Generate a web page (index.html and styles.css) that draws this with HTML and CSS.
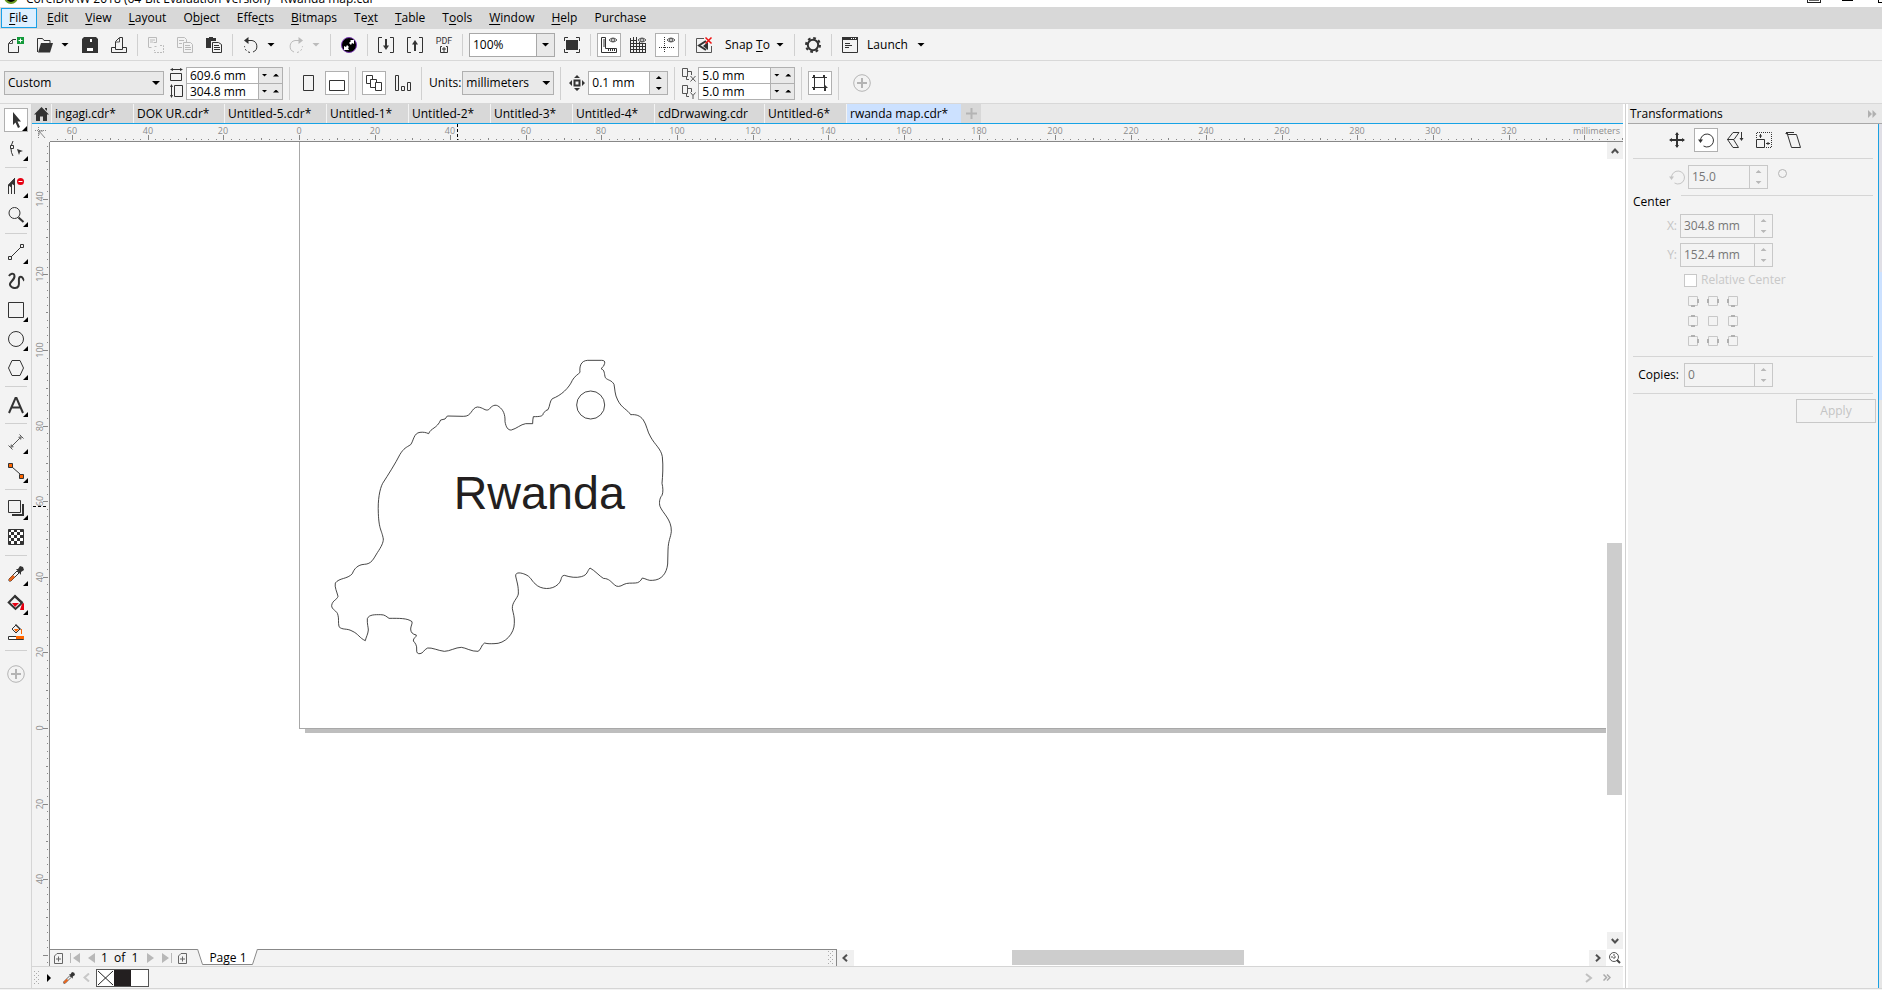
FILE: index.html
```html
<!DOCTYPE html>
<html lang="en">
<head>
<meta charset="utf-8">
<title>CorelDRAW 2018 - Rwanda map.cdr</title>
<link rel="stylesheet" href="styles.css">
</head>
<body>
<header class="titlebar">
  <span class="app-dot"></span><span class="title-text">CorelDRAW 2018 (64-Bit Evaluation Version) - Rwanda map.cdr</span>
  <span class="window-icons"><i class="win-user"></i><i class="win-min"></i><i class="win-max"></i></span>
</header>

<nav class="menubar" aria-label="Main menu">
  <button class="menu-item active"><u>F</u>ile</button><button class="menu-item"><u>E</u>dit</button><button class="menu-item"><u>V</u>iew</button><button class="menu-item"><u>L</u>ayout</button><button class="menu-item">O<u>b</u>ject</button><button class="menu-item">Effe<u>c</u>ts</button><button class="menu-item"><u>B</u>itmaps</button><button class="menu-item">Te<u>x</u>t</button><button class="menu-item"><u>T</u>able</button><button class="menu-item">T<u>o</u>ols</button><button class="menu-item"><u>W</u>indow</button><button class="menu-item"><u>H</u>elp</button><button class="menu-item">Purchase</button>
</nav>

<div class="toolbar">
  <button class="tool" aria-label="New"><svg class="icon" viewBox="0 0 16 16"><path d="M8 2.500H4.500L.5 6.500v9h10V9" class="ln"/><path d="M4.500 3v3.500H1" class="ln thin"/><path d="M9 0h7v7H9z" fill="#139a3a"/><path d="M12.500 1.500v4M10.500 3.500h4" stroke="#fff" stroke-width="1"/></svg></button>
  <div class="split"><button class="tool" aria-label="Open"><svg class="icon" viewBox="0 0 16 16"><path d="M.5 15V1.500h5l1.500 2h6V6" class="ln"/><path d="M1 15.500L4 6h12l-3 9.500z" class="fl"/></svg></button><button class="drop" aria-label="Recent files"></button></div>
  <button class="tool" aria-label="Save"><svg class="icon" viewBox="0 0 16 16"><path d="M2 0h12l2 2v14H0V2z" class="fl"/><path d="M8 2h2v3H8zM5 11h6v3H5z" fill="#fff"/></svg></button>
  <button class="tool" aria-label="Print"><svg class="icon" viewBox="0 0 16 16"><path d="M4.500 10.500h-4v5h15v-5h-4M4.500 12.500v-8l4-4h3v12z" class="ln"/><path d="M8.500 1v4H5" class="ln thin"/></svg></button>
  <span class="sep"></span>
  <button class="tool off" disabled aria-label="Cut"><svg class="icon" viewBox="0 0 16 16"><path d="M.5 10V.5h8v5h-3M2 3h5M2 5h3" class="ln"/><path d="M.5 10.500h3" class="ln"/><path d="M6.500 9.500h3M12 8.500h3.500v7h-9V13" class="ln" stroke-dasharray="2 1"/></svg></button>
  <button class="tool off" disabled aria-label="Copy"><svg class="icon" viewBox="0 0 16 16"><path d="M5 10.500H.5V.5h7l2 2V5M2 3.500h5M2 6.500h3M6.500 5.500h7l2 2v8h-9zM8 8.500h5M8 10.500h6M8 12.500h6" class="ln"/></svg></button>
  <button class="tool" aria-label="Paste"><svg class="icon" viewBox="0 0 16 16"><path d="M0 1h3V0h4v1h3v3H5v7H0z" class="fl"/><path d="M6.500 5.500h6l3 2v8h-9zM8 8.500h5M8 10.500h6M8 12.500h6" class="ln" fill="#f3f3f3"/></svg></button>
  <span class="sep"></span>
  <div class="split"><button class="tool" aria-label="Undo"><svg class="icon" viewBox="0 0 16 16"><path d="M4 3.500h5a6 6 0 0 1 1 11.500" class="ln"/><path d="M7 15.500Q2 14.500 1.500 9" class="ln" stroke-dasharray="2 2"/><path d="M5.500 0v7L1 3.500z" class="fl"/></svg></button><button class="drop" aria-label="Undo list"></button></div>
  <div class="split"><button class="tool off" disabled aria-label="Redo"><svg class="icon" viewBox="0 0 16 16"><path d="M12 3.500H7A6 6 0 0 0 6 15" class="ln"/><path d="M9 15.500Q14 14.500 14.500 9" class="ln" stroke-dasharray="2 2"/><path d="M10.500 0v7L15 3.500z" class="fl"/></svg></button><button class="drop off" disabled aria-label="Redo list"></button></div>
  <span class="sep"></span>
  <button class="tool" aria-label="Search content"><svg class="icon" viewBox="0 0 16 16"><circle cx="8" cy="8" r="7.500" fill="#000" stroke="#7d3cb5"/><path d="M9 3h4v4l-2-1-1 2-2-2 2-2zM3 13V9l2 1 1-2 2 2-1 1 1 2z" fill="#fff"/></svg></button>
  <span class="sep"></span>
  <button class="tool" aria-label="Import"><svg class="icon" viewBox="0 0 16 16"><path d="M4 .5H.5v15H4M12 .5h3.500v15H12" class="ln"/><path d="M8 2v8" class="ln bold"/><path d="M5 8.500h6L8 13z" class="fl"/></svg></button>
  <button class="tool" aria-label="Export"><svg class="icon" viewBox="0 0 16 16"><path d="M4 .5H.5v15H4M12 .5h3.500v15H12" class="ln"/><path d="M8 6v8" class="ln bold"/><path d="M5 7.500h6L8 3z" class="fl"/></svg></button>
  <button class="tool pdf" aria-label="Publish to PDF"><span>PDF</span><svg width="8" height="8" viewBox="0 0 8 8"><path d="M2 1.500H.5v6h7v-6H6M4 7V2M2 4h4" class="ln"/></svg></button>
  <span class="sep"></span>
  <div class="combo zoom"><input value="100%" aria-label="Zoom level"><button class="drop" aria-label="Zoom levels"></button></div>
  <button class="tool" aria-label="Full screen"><svg class="icon" viewBox="0 0 16 16"><path d="M2 3h12v10H2z" class="fl"/><path d="M.5 4V.5H4M12 .5h3.500V4M15.500 12v3.500H12M4 15.500H.5V12" class="ln"/></svg></button>
  <span class="sep"></span>
  <button class="tool on" aria-label="Show rulers"><svg class="icon" viewBox="0 0 16 16"><path d="M.5.5h4v11h11v4H.5zM2 3h2M2 5h2M2 7h2M2 9h2M7.500 12v2M9.500 12v2M11.500 12v2M13.500 12v2" class="ln"/><path d="M8 3q4-4 8 0-4 4-8 0z" class="ln thin"/><circle cx="12" cy="3" r="1.500" class="ln thin"/></svg></button>
  <button class="tool" aria-label="Show grid"><svg class="icon" viewBox="0 0 16 16"><path d="M.5 1v15M3.500 0v16M6.500 0v16M9.500 5v11M12.500 6v10M15.500 7v9M0 3.500h7M0 6.500h16M0 9.500h16M0 12.500h16M0 15.500h16" class="ln"/><path d="M8 3q4-4 8 0-4 4-8 0z" class="ln thin"/><circle cx="12" cy="3" r="1.500" class="ln thin"/></svg></button>
  <button class="tool on" aria-label="Show guidelines"><svg class="icon" viewBox="0 0 16 16"><path d="M5.500 0v16M0 10.500h16" class="ln" stroke-dasharray="1 1"/><path d="M8 3q4-4 8 0-4 4-8 0z" class="ln thin"/><circle cx="12" cy="3" r="1.500" class="ln thin"/></svg></button>
  <span class="sep"></span>
  <button class="tool" aria-label="Snap off"><svg class="icon" viewBox="0 0 16 16"><path d="M8 1.500H.5v14h15V9" class="ln thin"/><path d="M10 4L3 8.500 10 13" class="ln bold"/><path d="M12 5v8L7 9z" class="fl"/><path d="M9.500.5l6 6M15.500.5l-6 6" stroke="#e11" stroke-width="1.500"/></svg></button>
  <button class="text-tool snap"><span>Snap <u>T</u>o</span><i class="tri"></i></button>
  <span class="sep"></span>
  <button class="tool" aria-label="Options"><svg class="icon" viewBox="0 0 16 16"><circle cx="8" cy="8" r="5.200" class="ln bold"/><circle cx="8" cy="8" r="7" fill="none" stroke="#333" stroke-width="2" stroke-dasharray="2.750 2.750"/></svg></button>
  <span class="sep"></span>
  <button class="text-tool launch"><svg class="icon" viewBox="0 0 16 16"><path d="M.5.5h15v15H.5zM3 6.500h5M3 8.500h7M3 10.500h4" class="ln"/><path d="M0 0h16v3H0z" class="fl"/><path d="M9 1h1v1H9zM11 1h1v1h-1zM13 1h1v1h-1z" fill="#fff"/></svg><span>Launch</span><i class="tri"></i></button>
</div>

<div class="toolbar property-bar">
  <div class="select-box preset"><select aria-label="Page size"><option>Custom</option></select></div>
  <div class="size-group">
    <div class="size-icons"><svg width="14" height="13" viewBox="0 0 14 13"><path d="M.5 5.500h11v7H.5zM1 1.500h11" class="ln"/><path d="M3 0v3L0 1.500zM10 0v3l3-1.500z" class="fl"/></svg><svg width="14" height="14" viewBox="0 0 14 14"><path d="M4.500 1.500h8v11h-8zM1.500 1v12" class="ln"/><path d="M0 3h3L1.500 0zM0 11h3l-1.500 3z" class="fl"/></svg></div>
    <div class="pair"><div class="pair-row"><input value="609.6 mm" aria-label="Page width"><button class="pm" aria-label="Decrease width"><i class="tri small"></i></button><button class="pm" aria-label="Increase width"><i class="tri small up"></i></button></div><div class="pair-row"><input value="304.8 mm" aria-label="Page height"><button class="pm" aria-label="Decrease height"><i class="tri small"></i></button><button class="pm" aria-label="Increase height"><i class="tri small up"></i></button></div></div>
  </div>
  <span class="sep tall"></span>
  <button class="tool" aria-label="Portrait"><svg class="icon" viewBox="0 0 16 16"><path d="M3.500.5h10v15h-10z" class="ln"/></svg></button>
  <button class="tool on" aria-label="Landscape"><svg class="icon" viewBox="0 0 16 16"><path d="M.5 5.500h15v10H.5z" class="ln"/></svg></button>
  <span class="sep tall"></span>
  <button class="tool on" aria-label="All pages"><svg class="icon" viewBox="0 0 16 16"><path d="M4 8.500H.5v-8h6V4M9 12.500H4.500v-8h6V7M9.500 7.500h6v8h-6z" class="ln"/></svg></button>
  <button class="tool" aria-label="Current page"><svg class="icon" viewBox="0 0 16 16"><path d="M.5.5h3v15h-3zM6.500 11.500h3v4h-3zM12.500 7.500h3v8h-3z" class="ln"/></svg></button>
  <span class="sep tall"></span>
  <label class="units" for="units">Units:</label>
  <div class="select-box units-box"><select id="units"><option>millimeters</option></select></div>
  <span class="sep tall"></span>
  <div class="nudge"><svg class="icon" viewBox="0 0 16 16"><path d="M5.500 5.500h5v5h-5z" class="ln bold"/><path d="M8 0l3 3H5zM8 16l3-3H5zM0 8l3-3v6zM16 8l-3-3v6z" class="fl"/></svg>
  <div class="spin"><input value="0.1 mm" aria-label="Nudge distance"><span class="spin-btns"><button aria-label="Increase"><i class="tri small up"></i></button><button aria-label="Decrease"><i class="tri small"></i></button></span></div></div>
  <span class="sep tall"></span>
  <div class="size-group">
    <div class="size-icons"><svg width="14" height="14" viewBox="0 0 14 14"><path d="M.5.5h5v8h-5zM6 3.500h3.500V7M4.500 9v2.500H7" class="ln thin"/><path d="M8.500 8l5 5.500M13.500 8l-5 5.500" class="ln thin"/></svg><svg width="14" height="14" viewBox="0 0 14 14"><path d="M.5.5h5v8h-5zM6 3.500h3.500V7M4.500 9v2.500H7" class="ln thin"/><path d="M8.500 7.500l2.500 3 2.500-3M11 10.500V14" class="ln thin"/></svg></div>
    <div class="pair"><div class="pair-row"><input value="5.0 mm" aria-label="Duplicate distance X"><button class="pm" aria-label="Decrease X"><i class="tri small"></i></button><button class="pm" aria-label="Increase X"><i class="tri small up"></i></button></div><div class="pair-row"><input value="5.0 mm" aria-label="Duplicate distance Y"><button class="pm" aria-label="Decrease Y"><i class="tri small"></i></button><button class="pm" aria-label="Increase Y"><i class="tri small up"></i></button></div></div>
  </div>
  <span class="sep tall"></span>
  <button class="tool on" aria-label="Treat as filled"><svg class="icon" viewBox="0 0 16 16"><path d="M2.500 2.500h10v10h-10z" class="ln"/><path d="M1 0h2v2h2v1H3v2H2V3H0V2h1zM11 0h2v2h2v1h-2v2h-1V3h-1zM2 10h1v2h2v1H3v2H1v-2H0v-1h2z" class="fl"/><path d="M12 9l4 4h-2v3h-2z" class="fl"/></svg></button>
  <span class="sep tall"></span>
  <button class="tool add" aria-label="Customize"><svg width="18" height="18" viewBox="0 0 18 18"><circle cx="9" cy="9" r="8.300" fill="none" stroke="#b4b4b4"/><path d="M9 4v10M4 9h10" stroke="#b4b4b4" stroke-width="2"/></svg></button>
</div>

<div class="body">
  <aside class="toolbox" aria-label="Toolbox">
    <button class="tool on fly" aria-label="Pick"><svg class="icon" viewBox="0 0 16 16"><path d="M5 0l8 9.500H9.500L12 15l-2 1-2.500-5.500L5 13z" class="fl"/></svg></button>
    <button class="tool fly" aria-label="Shape"><svg class="icon" viewBox="0 0 16 16"><path d="M5 0Q1 8 5 15" class="ln"/><path d="M2.500 4.500h3v3h-3z" class="ln" fill="#f3f3f3"/><path d="M9 8l6 2-3 1-1 3z" class="fl"/></svg></button>
    <span class="rule"></span>
    <button class="tool fly" aria-label="Crop"><svg class="icon" viewBox="0 0 16 16"><path d="M.5 16V7L7 0M3.500 16V8M6.500 16V1" class="ln"/><path d="M0 7l7-7v8L4 6v4z" class="fl"/><circle cx="12.500" cy="3.500" r="3.500" fill="#e60012"/><path d="M10.500 3.500h4" stroke="#fff"/></svg></button>
    <button class="tool fly" aria-label="Zoom"><svg class="icon" viewBox="0 0 16 16"><circle cx="6.500" cy="6" r="5.500" class="ln"/><path d="M10.500 10.500l5 4.500" class="ln bold"/></svg></button>
    <span class="rule"></span>
    <button class="tool fly" aria-label="Freehand"><svg class="icon" viewBox="0 0 16 16"><path d="M3 13L13 3M.5 12.500h3v3h-3zM12.500.5h3v3h-3z" class="ln"/></svg></button>
    <button class="tool" aria-label="Artistic media"><svg class="icon" viewBox="0 0 16 16"><path d="M1 3C2 1 6-1 6.500 3S1 9 2 12s7 4.500 8.500 1-1-8 1.500-9 4 3 3 3.500" class="ln bold"/></svg></button>
    <button class="tool fly" aria-label="Rectangle"><svg class="icon" viewBox="0 0 16 16"><path d="M.5.5h15v15H.5z" class="ln"/></svg></button>
    <button class="tool fly" aria-label="Ellipse"><svg class="icon" viewBox="0 0 16 16"><circle cx="8" cy="8" r="7.500" class="ln"/></svg></button>
    <button class="tool fly" aria-label="Polygon"><svg class="icon" viewBox="0 0 16 16"><path d="M4 .5h8L15.500 8 12 15.500H4L.5 8z" class="ln"/></svg></button>
    <span class="rule"></span>
    <button class="tool fly" aria-label="Text"><svg class="icon" viewBox="0 0 16 16"><path d="M1 16L7.500 1h1L15 16M4 10.500h8" class="ln bold"/></svg></button>
    <span class="rule"></span>
    <button class="tool fly" aria-label="Dimension"><svg class="icon" viewBox="0 0 16 16"><path d="M3 13L13 3M.5 11.500l4 4M11.500.5l4 4" class="ln thin"/><path d="M2 14l1-4 3 3zM14 2l-1 4-3-3z" fill="#777"/></svg></button>
    <button class="tool fly" aria-label="Connector"><svg class="icon" viewBox="0 0 16 16"><path d="M4 4l8 7" class="ln"/><path d="M.5.5h4v4h-4zM11.500 11.500h4v4h-4z" fill="#f60" stroke="#333"/></svg></button>
    <span class="rule"></span>
    <button class="tool fly" aria-label="Drop shadow"><svg class="icon" viewBox="0 0 16 16"><path d="M.5.5h12v12H.5z" class="ln"/><path d="M14 4h2v12H4v-2h10z" class="fl"/></svg></button>
    <button class="tool" aria-label="Transparency"><svg class="icon" viewBox="0 0 16 16"><defs><pattern id="check" width="6" height="6" patternUnits="userSpaceOnUse"><path d="M0 0h6v6H0z" fill="#fff"/><path d="M0 0h3v3H0zM3 3h3v3H3z" fill="#333"/></pattern></defs><path d="M.5.5h15v15H.5z" fill="url(#check)" stroke="#333"/></svg></button>
    <span class="rule"></span>
    <button class="tool fly" aria-label="Color eyedropper"><svg class="icon" viewBox="0 0 16 16"><path d="M9 5l2 2-8 8H1v-2z" class="ln"/><path d="M1 15v-2l4-4 2 2-4 4z" fill="#e8641b"/><path d="M8 3h2l2-3 3 1 1 3-3 2v3z" class="fl"/></svg></button>
    <button class="tool fly" aria-label="Interactive fill"><svg class="icon" viewBox="0 0 16 16"><path d="M7 1L.7 7.500 7.500 14 14 8z" class="ln bold"/><path d="M4 8h7l-4 4z" fill="#e60012"/><path d="M7 0l8 7-1 2-8-7z" class="fl"/><path d="M16 8v7h-4l2-6z" fill="#e60012"/></svg></button>
    <button class="tool" aria-label="Smart fill"><svg class="icon" viewBox="0 0 16 16"><path d="M8 1L4 5l4 4 4-4z" class="ln"/><path d="M6 5h5L8 8z" fill="#f60"/><path d="M8 0l5 5-1 1-5-5z" class="fl"/><path d="M13 5h1v5h-1z" fill="#f60"/><path d="M.5 12.500h15v3H.5z" fill="#fff" stroke="#333"/><path d="M8 12h8v3H8z" fill="#f60"/></svg></button>
    <span class="rule"></span>
    <button class="tool add-tool" aria-label="Customize toolbox"><svg width="18" height="18" viewBox="0 0 18 18"><circle cx="9" cy="9" r="8.300" fill="none" stroke="#b4b4b4"/><path d="M9 4v10M4 9h10" stroke="#b4b4b4" stroke-width="2"/></svg></button>
  </aside>

  <main class="workspace">
    <div class="tabs" role="tablist">
      <button class="tab-home" aria-label="Welcome screen"><svg width="15" height="14" viewBox="0 0 15 14"><path d="M7.500 0L15 7.500h-2V14H9V9.500H6V14H2V7.500H0zM11 1h2v3l-2-2z" fill="#333"/></svg></button>
      <button class="tab w82" role="tab">ingagi.cdr*</button><button class="tab w91" role="tab">DOK UR.cdr*</button><button class="tab w102" role="tab">Untitled-5.cdr*</button><button class="tab w82" role="tab">Untitled-1*</button><button class="tab w82" role="tab">Untitled-2*</button><button class="tab w82" role="tab">Untitled-3*</button><button class="tab w82" role="tab">Untitled-4*</button><button class="tab w110" role="tab">cdDrwawing.cdr</button><button class="tab w82" role="tab">Untitled-6*</button><button class="tab w115 current" role="tab" aria-selected="true">rwanda map.cdr*</button>
      <button class="tab-add" aria-label="New document"><svg width="11" height="11" viewBox="0 0 11 11"><path d="M5.500 0v11M0 5.500h11" stroke="#b4b4b4" stroke-width="2"/></svg></button>
    </div>
    <div class="edit-area">
      <div class="origin"><svg width="12" height="12" viewBox="0 0 12 12"><path d="M3.500 0v12M0 3.500h12" stroke="#888" stroke-dasharray="1 1"/><path d="M4 4l6 7M4 8V4h4" stroke="#888" fill="none"/></svg></div>
      <div class="ruler-h"><svg id="rulerH"></svg><span class="ruler-unit">millimeters</span></div>
      <div class="ruler-v"><svg id="rulerV"></svg></div>
      <div class="canvas">
        <div class="page-shadow"></div>
        <div class="page">
          <svg class="artwork" width="370" height="330" viewBox="0 0 1110 990">
            <path class="outline" d="M780 97 C778 80 782 62 803 61 L845 61 Q856 61 854 70 Q853 79 843 86 C855 90 852 101 856 113 C864 122 874 119 882 133 C885 147 884 164 893 180 C905 205 922 208 932 224 C948 223 960 226 970 240 C980 254 982 276 992 291 C1005 315 1023 326 1027 350 C1030 380 1028 408 1026 430 C1029 443 1030 457 1026 466 C1018 475 1017 490 1020 499 C1028 520 1055 538 1054 574 C1052 594 1045 600 1044 630 L1043 672 C1040 700 1025 720 998 721 C985 723 978 716 967 714 C962 723 956 729 946 729 C934 730 922 728 912 733 Q893 745 883 734 C872 725 868 716 850 715 C838 708 825 692 810 684 C800 695 804 704 784 710 C768 714 752 712 733 706 C720 708 728 720 714 733 C697 750 662 750 645 731 C634 722 633 710 615 703 C606 699 586 694 587 708 C590 724 596 738 595 762 C592 776 576 786 577 806 C580 822 584 830 583 850 C583 880 556 912 522 911 C510 911 504 912 494 909 C482 915 485 929 474 934 C454 935 437 923 424 922 C407 922 389 934 373 934 C355 932 335 922 323 924 C312 928 309 941 300 941 Q289 942 290 930 C292 916 284 907 280 903 C279 893 290 892 289 885 Q272 882 272 867 C272 859 278 850 276 845 C262 834 238 835 207 835 C198 829 195 824 182 824 C166 824 147 823 142 836 C141 852 145 862 145 870 C144 883 138 891 136 902 C118 894 116 882 96 873 C80 864 67 871 57 860 C54 846 57 836 54 826 C52 811 34 810 35 796 C38 780 51 780 54 769 C51 756 43 741 46 729 C58 713 82 718 97 701 C102 687 113 674 133 673 C155 672 160 657 172 638 C184 620 190 608 190 597 C185 569 177 570 175 520 C173 480 179 447 188 430 C204 405 226 371 240 343 C252 324 258 323 272 314 C281 302 281 279 300 277 C310 276 317 277 326 281 C332 264 351 266 362 240 Q378 240 382 228 L430 229 C456 230 453 204 472 201 C490 202 495 214 506 209 C516 197 526 191 537 200 C549 209 556 222 555 245 C558 262 564 271 574 270 C590 266 602 253 617 251 L638 251 Q638 239 640 230 C660 230 669 229 670 220 Q678 209 684 209 C690 198 689 183 697 176 C724 166 747 144 757 121 C763 109 775 103 780 97Z"/>
            <circle class="outline" cx="812" cy="195" r="42"/>
            <text x="401" y="508" class="map-name">Rwanda</text>
          </svg>
        </div>
      </div>
      <div class="scroll-v">
        <button class="sb" aria-label="Scroll up"><svg width="8" height="6" viewBox="0 0 8 6"><path d="M.8 5L4 1.500 7.200 5" class="chev"/></svg></button>
        <div class="track-v"><i class="space-a"></i><i class="thumb-v"></i><i class="space-b"></i></div>
        <button class="sb" aria-label="Scroll down"><svg width="8" height="6" viewBox="0 0 8 6"><path d="M.8 1L4 4.500 7.200 1" class="chev"/></svg></button>
      </div>
      <div class="bottom-row">
        <div class="page-nav">
          <button class="nav" aria-label="Add page before"><svg width="9" height="11" viewBox="0 0 9 11"><path d="M3 .5h5.500v10h-8V3zM2 6h5M4.500 3.500v5" stroke="#666" fill="none"/></svg></button>
          <button class="nav" disabled aria-label="First page"><svg width="10" height="10" viewBox="0 0 10 10"><path d="M0 0h1v10H0zM10 0v10L3 5z" fill="#b8b8b8"/></svg></button>
          <button class="nav" disabled aria-label="Previous page"><svg width="10" height="10" viewBox="0 0 10 10"><path d="M9 0v10L2 5z" fill="#b8b8b8"/></svg></button>
          <span class="page-count">1&nbsp; of&nbsp; 1</span>
          <button class="nav" disabled aria-label="Next page"><svg width="10" height="10" viewBox="0 0 10 10"><path d="M1 0v10l7-5z" fill="#b8b8b8"/></svg></button>
          <button class="nav" disabled aria-label="Last page"><svg width="10" height="10" viewBox="0 0 10 10"><path d="M9 0h1v10H9zM0 0v10l7-5z" fill="#b8b8b8"/></svg></button>
          <button class="nav" aria-label="Add page after"><svg width="9" height="11" viewBox="0 0 9 11"><path d="M3 .5h5.500v10h-8V3zM2 6h5M4.500 3.500v5" stroke="#666" fill="none"/></svg></button>
          <button class="page-tab"><svg width="61" height="17" viewBox="0 0 61 17"><path d="M0 0h61l-5 16H5z" fill="#fff"/><path d="M.5 0l5 15.500h50l5-15.500" fill="none" stroke="#888"/></svg><span>Page 1</span></button>
          <i class="grip"></i>
        </div>
        <div class="scroll-h">
          <button class="sb" aria-label="Scroll left"><svg width="6" height="8" viewBox="0 0 6 8"><path d="M5 .8L1.500 4 5 7.200" class="chev"/></svg></button>
          <div class="track-h"><i class="hs-a"></i><i class="thumb-h"></i><i class="hs-b"></i></div>
          <button class="sb" aria-label="Scroll right"><svg width="6" height="8" viewBox="0 0 6 8"><path d="M1 .8L4.500 4 1 7.200" class="chev"/></svg></button>
        </div>
        <button class="navigator" aria-label="Navigator"><svg width="12" height="12" viewBox="0 0 12 12"><circle cx="5" cy="5" r="4.500" fill="none" stroke="#555"/><path d="M5 2v6M2 5h6" stroke="#555" stroke-dasharray="2 1"/><path d="M8 8l3 3" stroke="#444" stroke-width="2"/></svg></button>
      </div>
    </div>
    <div class="palette">
      <i class="grip"></i>
      <button class="pal-btn" aria-label="Palette menu"><svg width="4" height="8" viewBox="0 0 4 8"><path d="M0 0l4 4-4 4z"/></svg></button>
      <button class="pal-btn dropper" aria-label="Pick color"><svg width="12" height="12" viewBox="0 0 16 16"><path d="M9 5l2 2-8 8H1v-2z" class="ln"/><path d="M1 15v-2l4-4 2 2-4 4z" fill="#e8641b"/><path d="M8 3h2l2-3 3 1 1 3-3 2v3z" class="fl"/></svg></button>
      <button class="pal-btn" disabled aria-label="Scroll palette left"><svg width="7" height="9" viewBox="0 0 7 9"><path d="M6 .5L1.500 4.500 6 8.500" fill="none" stroke="#c8c8c8" stroke-width="2"/></svg></button>
      <div class="swatches"><button class="swatch" aria-label="No color"><svg width="15" height="16" viewBox="0 0 15 16"><path d="M0 1l15 14M15 1L0 15" stroke="#222"/></svg></button><button class="swatch black" aria-label="Black"></button><button class="swatch" aria-label="White"></button></div>
      <button class="pal-btn end" disabled aria-label="Scroll palette right"><svg width="8" height="10" viewBox="0 0 8 10"><path d="M1 1l5 4-5 4" fill="none" stroke="#c0c0c0" stroke-width="2"/></svg></button>
      <button class="pal-btn" disabled aria-label="Expand palette"><svg width="8" height="7" viewBox="0 0 8 7"><path d="M.5.5l3 3-3 3M4 .5l3 3-3 3" fill="none" stroke="#aaa" stroke-width="1.500"/></svg></button>
    </div>
  </main>

  <section class="docker" aria-label="Transformations">
    <div class="docker-panel">
      <div class="docker-head"><h2>Transformations</h2><svg width="9" height="8" viewBox="0 0 9 8"><path d="M0 0l4 4-4 4zM4.500 0l4 4-4 4z" fill="#b0b0b0"/></svg></div>
      <div class="docker-body">
        <div class="modes">
          <button class="tool" aria-label="Position"><svg class="icon" viewBox="0 0 16 16"><path d="M8 1v14M1 8h14" class="ln bold"/><path d="M8 0l2 3H6zM8 16l2-3H6zM0 8l3-2v4zM16 8l-3-2v4z" class="fl"/></svg></button>
          <button class="tool on" aria-label="Rotate"><svg class="icon" viewBox="0 0 16 16"><path d="M2.500 9A6.500 6.500 0 1 1 5.500 14" class="ln"/><path d="M0 7.500h5L2.500 11z" class="fl"/></svg></button>
          <button class="tool" aria-label="Scale and mirror"><svg class="icon" viewBox="0 0 16 16"><path d="M.5 7.500L6 .5h6L7 7.500zM.5 7.500h6l5 8H6z" class="ln"/><path d="M14.500 0v8" class="ln"/><path d="M12.500 6h4l-2 3z" class="fl"/></svg></button>
          <button class="tool" aria-label="Size"><svg class="icon" viewBox="0 0 16 16"><path d="M.5 7.500h8v8h-8z" class="ln"/><path d="M.5 6V.5h15v15H10" class="ln" stroke-dasharray="1 1"/><path d="M4.500 2v4M3 4h3M10 11.500h4M12 10v3" class="ln"/></svg></button>
          <button class="tool" aria-label="Skew"><svg class="icon" viewBox="0 0 16 16"><path d="M2.500 2.500h9l4 13h-9z" class="ln"/><path d="M1 .5h8" class="ln"/><path d="M3 0v3L0 1.500z" class="fl"/></svg></button>
        </div>
        <div class="angle-row">
          <svg class="icon faint" viewBox="0 0 16 16"><path d="M2.500 9A6.500 6.500 0 1 1 5.500 14" class="ln"/><path d="M0 7.500h5L2.500 11z" class="fl"/></svg>
          <div class="spin dim"><input value="15.0" disabled aria-label="Angle"><span class="spin-btns"><button disabled aria-label="Increase"><i class="tri small up"></i></button><button disabled aria-label="Decrease"><i class="tri small"></i></button></span></div>
          <i class="degree"></i>
        </div>
        <div class="center-head"><span>Center</span><i></i></div>
        <div class="field xy"><label for="cx">X:</label><div class="spin dim"><input id="cx" value="304.8 mm" disabled><span class="spin-btns"><button disabled aria-label="Increase"><i class="tri small up"></i></button><button disabled aria-label="Decrease"><i class="tri small"></i></button></span></div></div>
        <div class="field xy"><label for="cy">Y:</label><div class="spin dim"><input id="cy" value="152.4 mm" disabled><span class="spin-btns"><button disabled aria-label="Increase"><i class="tri small up"></i></button><button disabled aria-label="Decrease"><i class="tri small"></i></button></span></div></div>
        <label class="relative"><input type="checkbox" disabled><span>Relative Center</span></label>
        <div class="anchors"><svg width="54" height="54" viewBox="0 0 54 54">
          <path d="M2.500 2.500h9v9h-9zM22.500 2.500h9v9h-9zM42.500 2.500h9v9h-9zM2.500 22.500h9v9h-9zM22.500 22.500h9v9h-9zM42.500 22.500h9v9h-9zM2.500 42.500h9v9h-9zM22.500 42.500h9v9h-9zM42.500 42.500h9v9h-9z" fill="none" stroke="#c8c8c8" stroke-linejoin="round"/>
          <path d="M5 11h4v2H5zM11 5h2v4h-2zM21 5h2v4h-2zM31 5h2v4h-2zM41 5h2v4h-2zM45 11h4v2h-4zM5 21h4v2H5zM5 31h4v2H5zM45 21h4v2h-4zM45 31h4v2h-4zM5 41h4v2H5zM11 45h2v4h-2zM21 45h2v4h-2zM31 45h2v4h-2zM41 45h2v4h-2zM45 41h4v2h-4z" fill="#b0b0b0"/></svg></div>
        <div class="field copies"><label for="copies">Copies:</label><div class="spin dim"><input id="copies" value="0" disabled><span class="spin-btns"><button disabled aria-label="Increase"><i class="tri small up"></i></button><button disabled aria-label="Decrease"><i class="tri small"></i></button></span></div></div>
        <button class="apply" disabled>Apply</button>
      </div>
    </div>
    <div class="edge-strip"></div>
  </section>
</div>
<footer class="status"></footer>
<script src="app.js"></script>
</body>
</html>
```

FILE: styles.css
```css
* { box-sizing: border-box; }
html, body { height: 100%; }
body {
  margin: 0;
  display: flex;
  flex-direction: column;
  overflow: hidden;
  background: #f3f3f3;
  color: #000;
  font: 12px/16px "Open Sans", "Noto Sans", sans-serif;
}
button, input, select { font: inherit; color: inherit; margin: 0; padding: 0; border: 0; border-radius: 0; background: none; outline: 0; }
input { min-width: 0; }
svg { display: block; }
.ln { fill: none; stroke: #333; stroke-width: 1; }
.ln[fill] { fill: #f3f3f3; }
.thin { stroke: #555; }
.bold { stroke-width: 2; }
.fl { fill: #333; }
.chev { fill: none; stroke: #505050; stroke-width: 2; }
.icon { width: 16px; height: 16px; flex: none; overflow: visible; }

.titlebar { height: 7px; flex: none; overflow: hidden; background: #fff; display: flex; align-items: flex-end; padding-left: 4px; }
.app-dot { flex: none; width: 14px; height: 14px; margin: 0 8px 3px 0; border-radius: 50%; background: #000; border: 2px solid #6a9a20; }
.title-text { white-space: nowrap; }
.window-icons { margin-left: auto; display: flex; align-items: flex-end; height: 7px; padding-bottom: 4px; }
.win-user { width: 14px; height: 14px; border: 1px solid #222; background: #666; box-shadow: inset 0 0 0 1px #fff; margin-right: 21px; }
.win-min { width: 11px; height: 1px; background: #000; margin: 0 25px 2px 0; }
.win-max { width: 4px; height: 11px; border: solid #000; border-width: 1px 0 1px 1px; }

.menubar { height: 22px; flex: none; background: #d8d8d8; display: flex; padding: 1px; }
.menu-item { height: 20px; padding: 0 9px 0 8px; white-space: nowrap; }
.menu-item.active { background: #ddefff; border: 1px solid #18a0e8; padding: 0 8px 0 7px; margin-right: 2px; }
u { text-underline-offset: 2px; }

.toolbar { height: 32px; flex: none; display: flex; align-items: center; gap: 5px; padding: 0 4px; border-bottom: 1px solid #d8d8d8; }
.property-bar { height: 43px; padding-top: 2px; }
.sep { flex: none; width: 1px; height: 22px; background: #d0d0d0; margin: 0 1px; }
.sep.tall { height: 33px; }
.tool { flex: none; width: 24px; height: 24px; display: flex; align-items: center; justify-content: center; position: relative; }
.tool.on { background: #fff; border: 1px solid #b0b0b0; }
.off .ln { stroke: #bbb; }
.off .fl { fill: #bbb; }
.split { display: flex; align-items: center; }
.drop { width: 16px; height: 24px; display: flex; align-items: center; justify-content: center; flex: none; }
.drop::before, .tri { content: ""; width: 8px; height: 4px; background: #000; clip-path: polygon(0 0, 100% 0, 50% 100%); flex: none; }
.drop.off::before { background: #bbb; }
.tri.small { width: 6px; height: 3px; }
.tri.up { clip-path: polygon(50% 0, 100% 100%, 0 100%); }
.pdf { flex-direction: column; }
.pdf span { font: 9px/8px Roboto, sans-serif; color: #333; }
.combo { display: flex; height: 24px; border: 1px solid #a8a8a8; background: #fff; }
.zoom { width: 86px; }
.zoom input { flex: 1; padding-left: 3px; }
.combo .drop { width: 18px; height: 22px; background: #e9e9e9; border-left: 1px solid #a8a8a8; }
.text-tool { display: flex; align-items: center; justify-content: space-between; height: 24px; padding: 0 4px; white-space: nowrap; }
.snap { width: 67px; }
.launch { width: 91px; }

.select-box { position: relative; flex: none; height: 24px; border: 1px solid #b0b0b0; background: #e9e9e9; }
.select-box select { appearance: none; width: 100%; height: 22px; padding: 0 20px 0 3px; }
.select-box::after { content: ""; position: absolute; right: 3px; top: 9px; width: 8px; height: 4px; background: #000; clip-path: polygon(0 0, 100% 0, 50% 100%); pointer-events: none; }
.preset { width: 160px; }
.units-box { width: 92px; margin-left: -4px; }
.units { margin-left: 1px; }
.size-group { display: flex; gap: 2px; align-items: center; margin-left: 1px; }
.size-icons { display: flex; flex-direction: column; gap: 3px; }
.pair { width: 97px; border: 1px solid #b0b0b0; background: #fff; }
.pair-row { display: flex; height: 15px; }
.pair-row + .pair-row { border-top: 1px solid #b0b0b0; height: 16px; }
.pair-row input { flex: 1; padding-left: 3px; line-height: 15px; }
.pm { width: 12px; background: #e9e9e9; display: flex; align-items: center; justify-content: center; }
input + .pm { border-left: 1px solid #b0b0b0; }
.nudge { display: flex; align-items: center; gap: 3px; margin-left: 2px; }
.spin { display: flex; width: 80px; height: 24px; border: 1px solid #b0b0b0; background: #fff; }
.spin input { flex: 1; padding-left: 3px; }
.spin-btns { width: 18px; display: flex; flex-direction: column; background: #e9e9e9; border-left: 1px solid #b0b0b0; }
.spin-btns button { flex: 1; display: flex; align-items: center; justify-content: center; }
.add { margin-left: 5px; }

.body { flex: 1; min-height: 0; display: flex; }
.toolbox { width: 32px; flex: none; border-right: 1px solid #d5d5d5; display: flex; flex-direction: column; gap: 5px; padding: 4px 3px 0 4px; }
.rule { height: 1px; flex: none; background: #d0d0d0; margin: 1px 0 1px 1px; width: 22px; }
.fly::after { content: ""; position: absolute; right: 0; bottom: 0; width: 5px; height: 5px; background: #000; clip-path: polygon(100% 0, 100% 100%, 0 100%); }
.add-tool { margin-top: 5px; }

.workspace { flex: 1; min-width: 0; display: flex; flex-direction: column; }
.tabs { height: 20px; flex: none; display: flex; background: #e9e9e9; border-bottom: 1px solid #16a3e6; }
.tab-home { width: 19px; background: #d8d8d8; display: flex; align-items: center; justify-content: center; }
.tab { flex: none; text-align: left; padding-left: 3px; background: #d8d8d8; border-left: 1px solid #f3f3f3; white-space: nowrap; }
.tab.current { background: #cce1ff; }
.w82 { width: 82px; }
.w91 { width: 91px; }
.w102 { width: 102px; }
.w110 { width: 110px; }
.w115 { width: 115px; }
.tab-add { width: 20px; background: #d8d8d8; display: flex; align-items: center; justify-content: center; }

.edit-area { flex: 1; min-height: 0; display: grid; grid-template-columns: 18px 1fr 16px; grid-template-rows: 18px 1fr 17px; }
.origin { display: flex; align-items: center; justify-content: center; }
.ruler-h { grid-column: 2 / 4; position: relative; border-bottom: 1px solid #888; overflow: hidden; }
.ruler-h svg, .ruler-v svg { width: 100%; height: 100%; }
.ruler-unit { position: absolute; right: 3px; top: 0; font-size: 9px; line-height: 13px; color: #8c8c8c; }
.ruler-v { grid-row: 2 / 4; grid-column: 1; border-right: 1px solid #888; overflow: hidden; }
.ruler-label { font-size: 9px; fill: #8c8c8c; text-anchor: middle; }
.tick { fill: #888; }
.marker { stroke: #000; stroke-dasharray: 3 2; }
.canvas { grid-column: 2; grid-row: 2; position: relative; overflow: hidden; background: #fff; }
.page { position: absolute; left: 249px; right: 1px; top: 0; height: 587px; border: solid #a8a8a8; border-width: 0 0 1px 1px; background: #fff; }
.page-shadow { position: absolute; left: 255px; right: 1px; top: 6px; height: 585px; background: #bebebe; }
.artwork { position: absolute; left: 20px; top: 198px; }
.outline { fill: none; stroke: #222; stroke-width: 2.5; stroke-linejoin: round; }
.map-name { font-family: "Liberation Sans", Arial, sans-serif; font-size: 140px; fill: #231f20; }

.scroll-v { grid-column: 3; grid-row: 2; display: flex; flex-direction: column; background: #fff; }
.sb { flex: none; width: 16px; height: 17px; background: #f0f0f0; display: flex; align-items: center; justify-content: center; }
.track-v { flex: 1; display: flex; flex-direction: column; }
.space-a { flex: 384; }
.thumb-v { flex: 253; width: 15px; background: #cdcdcd; }
.space-b { flex: 137; }
.bottom-row { grid-column: 2 / 4; grid-row: 3; display: flex; background: #fff; }
.page-nav { width: 50%; display: flex; align-items: center; background: #f3f3f3; border: solid #888; border-width: 1px 1px 0 0; padding: 0 2px 0 3px; }
.nav { width: 11px; margin-right: 5px; display: flex; justify-content: center; }
.page-count { margin-right: 7px; white-space: nowrap; }
.page-tab { position: relative; width: 61px; height: 17px; margin: -1px auto 0 4px; flex: none; }
.page-tab svg { position: absolute; left: 0; top: 0; }
.page-tab span { position: relative; display: block; line-height: 16px; }
.grip { width: 6px; height: 14px; flex: none; background: conic-gradient(from 270deg at 1px 1px, #aaa 90deg, transparent 0) 0 0 / 4px 4px, conic-gradient(from 270deg at 1px 1px, #aaa 90deg, transparent 0) 2px 2px / 4px 4px; }
.scroll-h { flex: 1; display: flex; align-items: flex-end; }
.scroll-h .sb { width: 17px; height: 16px; }
.track-h { flex: 1; display: flex; height: 16px; }
.hs-a { flex: 158; }
.thumb-h { flex: 232; height: 15px; background: #cdcdcd; }
.hs-b { flex: 344; }
.navigator { width: 17px; display: flex; align-items: center; justify-content: center; }

.palette { height: 22px; flex: none; border-top: 1px solid #d5d5d5; display: flex; align-items: center; padding: 0 12px 0 2px; }
.pal-btn { display: flex; align-items: center; margin-left: 7px; }
.dropper { margin: 0 1px 0 12px; }
.swatches { display: flex; margin-left: 6px; height: 18px; border: 1px solid #555; }
.swatch { width: 17px; height: 16px; background: #fff; display: flex; align-items: center; justify-content: center; }
.swatch.black { background: #231f20; }
.pal-btn.end { margin: 0 3px 0 auto; }
.status { height: 2px; flex: none; border-top: 1px solid #d5d5d5; }

.docker { width: 259px; flex: none; display: flex; border-left: 2px solid #fff; }
.docker-panel { flex: 1; border-left: 1px solid #d0d0d0; padding-left: 2px; background: linear-gradient(90deg, #fff 2px, #f3f3f3 2px); display: flex; flex-direction: column; }
.docker-head { height: 20px; background: #e9e9e9; border-bottom: 1px solid #a8a8a8; margin-right: -3px; display: flex; align-items: center; justify-content: space-between; padding: 0 5px 0 2px; }
.docker-head h2 { margin: 0; font: inherit; }
.docker-body { flex: 1; border-right: 1px solid #1ba1e2; padding: 4px 4px 0 5px; display: flex; flex-direction: column; }
.modes { display: flex; gap: 5px; padding: 0 0 6px 32px; border-bottom: 1px solid #d5d5d5; }
.modes, .center-head, .anchors { margin-right: 1px; }
.angle-row { display: flex; align-items: center; gap: 3px; padding: 6px 0 6px 36px; }
.faint .ln { stroke: #c4c4c4; }
.faint .fl { fill: #c4c4c4; }
.degree { width: 9px; height: 9px; border: 1px solid #b4b4b4; border-radius: 50%; margin: 0 0 7px 7px; }
.center-head { display: flex; align-items: flex-start; }
.center-head span { width: 48px; line-height: 14px; }
.center-head i { flex: 1; height: 1px; background: #d5d5d5; }
.field { display: flex; align-items: center; margin-bottom: 5px; }
.center-head + .field { margin-top: 5px; }
.xy label { width: 47px; padding-right: 3px; text-align: right; color: #c4c4c4; }
.xy .spin { width: 93px; }
.dim { border-color: #c8c8c8; background: #f3f3f3; color: #777; }
.dim input { -webkit-text-fill-color: #777; }
.dim .spin-btns { background: #f3f3f3; border-color: #c8c8c8; }
.dim .tri { background: #b8b8b8; }
.relative { display: flex; align-items: center; gap: 4px; padding-left: 51px; color: #c8c8c8; height: 16px; }
.relative input { appearance: none; width: 13px; height: 13px; border: 1px solid #c8c8c8; background: #fff; }
.anchors { padding: 6px 0 8px 53px; border-bottom: 1px solid #d5d5d5; }
.copies { margin: 0 1px 0 0; padding: 6px 0; border-bottom: 1px solid #d5d5d5; }
.copies label { width: 51px; padding-right: 5px; text-align: right; }
.copies .spin { width: 89px; }
.apply { align-self: flex-end; width: 80px; height: 24px; margin: 5px -2px 0 0; border: 1px solid #c8c8c8; color: #c4c4c4; }
.edge-strip { width: 3px; margin-top: 20px; background: linear-gradient(#e0dfe6 148px, #cce1ff 148px 276px, #e6e6e6 276px); }
```

FILE: app.js
```javascript
const NS = "http://www.w3.org/2000/svg";
const UNIT = 3.78;

function add(svg, name, attrs, text) {
  const el = document.createElementNS(NS, name);
  for (const key in attrs) el.setAttribute(key, attrs[key]);
  if (text !== undefined) el.textContent = text;
  svg.appendChild(el);
}

function drawRuler(svg, vertical, origin, marker) {
  svg.replaceChildren();
  const length = vertical ? svg.clientHeight : svg.clientWidth;
  const reserve = vertical ? 20 : 60;
  const first = Math.ceil(-origin / UNIT / 2) * 2;
  for (let v = first; origin + v * UNIT < length; v += 2) {
    const p = Math.round(origin + v * UNIT);
    const size = v % 20 === 0 ? 5 : v % 10 === 0 ? 2 : 1;
    const start = 16 - size;
    add(svg, "rect", vertical
      ? { class: "tick", x: start, y: p, width: size, height: 1 }
      : { class: "tick", x: p, y: start, width: 1, height: size });
    if (v % 20 === 0 && p < length - reserve) {
      add(svg, "text", vertical
        ? { class: "ruler-label", transform: `translate(11 ${p}) rotate(-90)` }
        : { class: "ruler-label", x: p, y: 10 }, Math.abs(v));
    }
  }
  add(svg, "path", { class: "marker", d: vertical ? `M1 ${marker}H16` : `M${marker} 0V16` });
}

function draw() {
  drawRuler(document.getElementById("rulerH"), false, 249, 407.5);
  drawRuler(document.getElementById("rulerV"), true, 586, 364.5);
}

draw();
window.addEventListener("resize", draw);
```
